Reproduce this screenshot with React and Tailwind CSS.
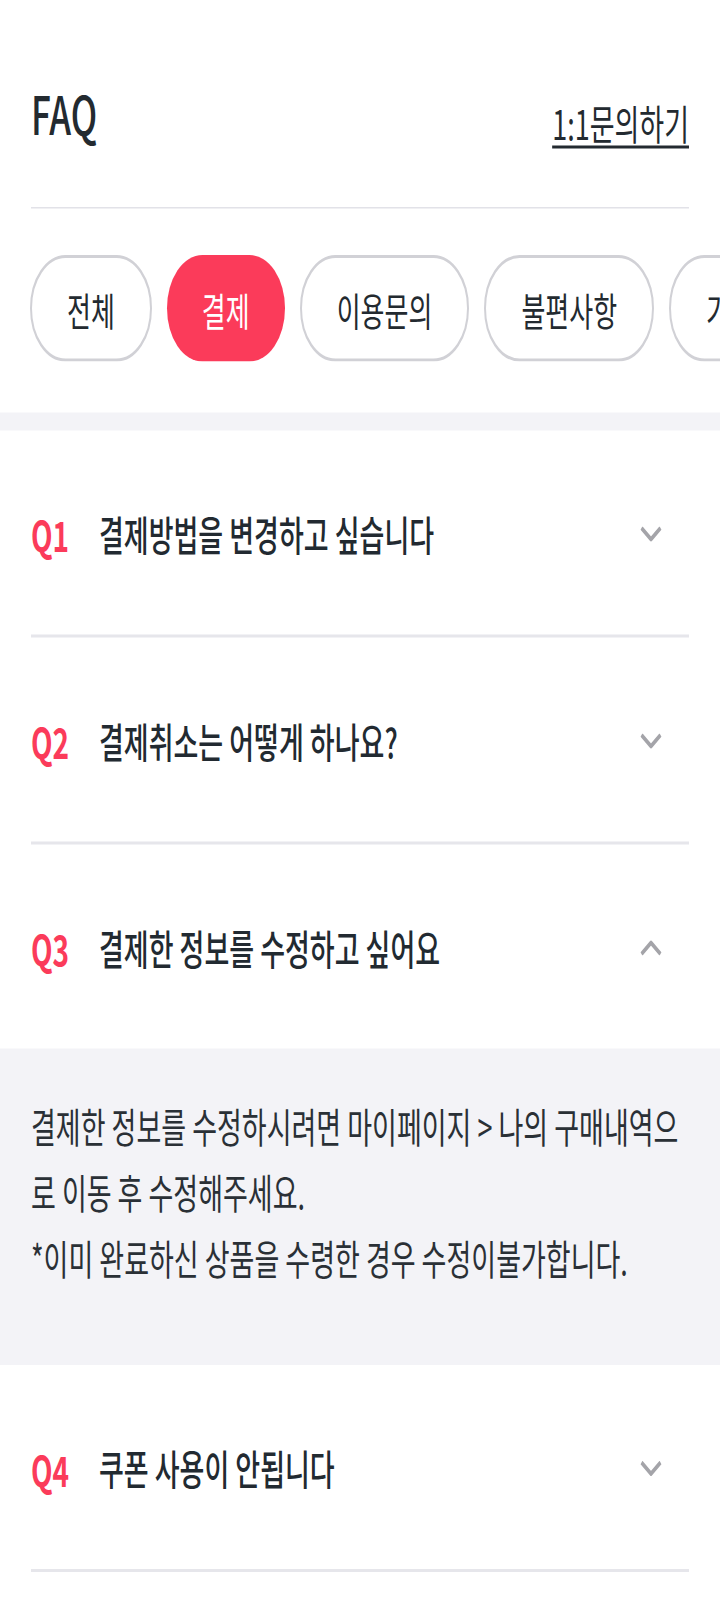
import React from "react";

const tabs = [
  { label: "전체", active: false },
  { label: "결제", active: true },
  { label: "이용문의", active: false },
  { label: "불편사항", active: false },
  { label: "기타", active: false },
];

const Chevron = ({ up }) => (
  <svg width="22" height="10" viewBox="0 0 22 10" className="shrink-0 mr-[27px]">
    <polyline
      points={up ? "1.5,9 11,1.5 20.5,9" : "1.5,1 11,8.5 20.5,1"}
      fill="none"
      stroke="#a4a4a9"
      strokeWidth="3"
      strokeLinejoin="miter"
    />
  </svg>
);

const QRow = ({ n, title, up }) => (
  <div className="h-[136px] flex items-center pt-[2px]">
    <span className="w-[68px] shrink-0 text-[28px] font-bold text-[#fb3b5a]">Q{n}</span>
    <span className="flex-1 text-[27px] font-medium text-[#222a31]">{title}</span>
    <Chevron up={up} />
  </div>
);

export default function App() {
  return (
    <div className="w-[720px] h-[1624px] overflow-hidden bg-white font-['Noto_Sans_CJK_KR',sans-serif]">
      <div className="origin-top scale-y-150">
        <div className="px-[31px] pt-[55px]">
          <div className="flex justify-between items-start">
            <h1 className="text-[35px] leading-[40px] font-medium text-[#232a30]">FAQ</h1>
            <a className="mt-[12px] text-[27px] leading-[30px] text-[#232a30] underline decoration-[1.5px] underline-offset-[4px]">
              1:1문의하기
            </a>
          </div>
          <div className="mt-[41px] h-px bg-[#e2e2e8]" />
        </div>
        <div className="mt-[31px] pl-[30px] flex gap-[15px] overflow-hidden">
          {tabs.map((t) => (
            <div
              key={t.label}
              className={
                t.active
                  ? "shrink-0 h-[71px] px-[35px] rounded-full flex items-center justify-center bg-[#fb3b5a] text-white text-[26px]"
                  : "shrink-0 h-[71px] px-[35px] rounded-full flex items-center justify-center border-2 border-[#d1d1d6] bg-white text-[#232a30] text-[26px]"
              }
            >
              {t.label}
            </div>
          ))}
        </div>
        <div className="mt-[34px] h-[12px] bg-[#f3f3f7]" />
        <div>
          <div className="px-[31px]">
            <QRow n={1} title="결제방법을 변경하고 싶습니다" />
            <div className="h-[2px] bg-[#e6e6eb]" />
            <QRow n={2} title="결제취소는 어떻게 하나요?" />
            <div className="h-[2px] bg-[#e6e6eb]" />
            <QRow n={3} title="결제한 정보를 수정하고 싶어요" up />
          </div>
          <div className="bg-[#f3f3f7] px-[31px] pt-[30px] pb-[49px] text-[27px] leading-[44px] text-[#2a3036]">
            <p>결제한 정보를 수정하시려면 마이페이지 &gt; 나의 구매내역으로 이동 후 수정해주세요.</p>
            <p>*이미 완료하신 상품을 수령한 경우 수정이불가합니다.</p>
          </div>
          <div className="px-[31px]">
            <QRow n={4} title="쿠폰 사용이 안됩니다" />
            <div className="h-[2px] bg-[#e6e6eb]" />
          </div>
        </div>
      </div>
    </div>
  );
}
